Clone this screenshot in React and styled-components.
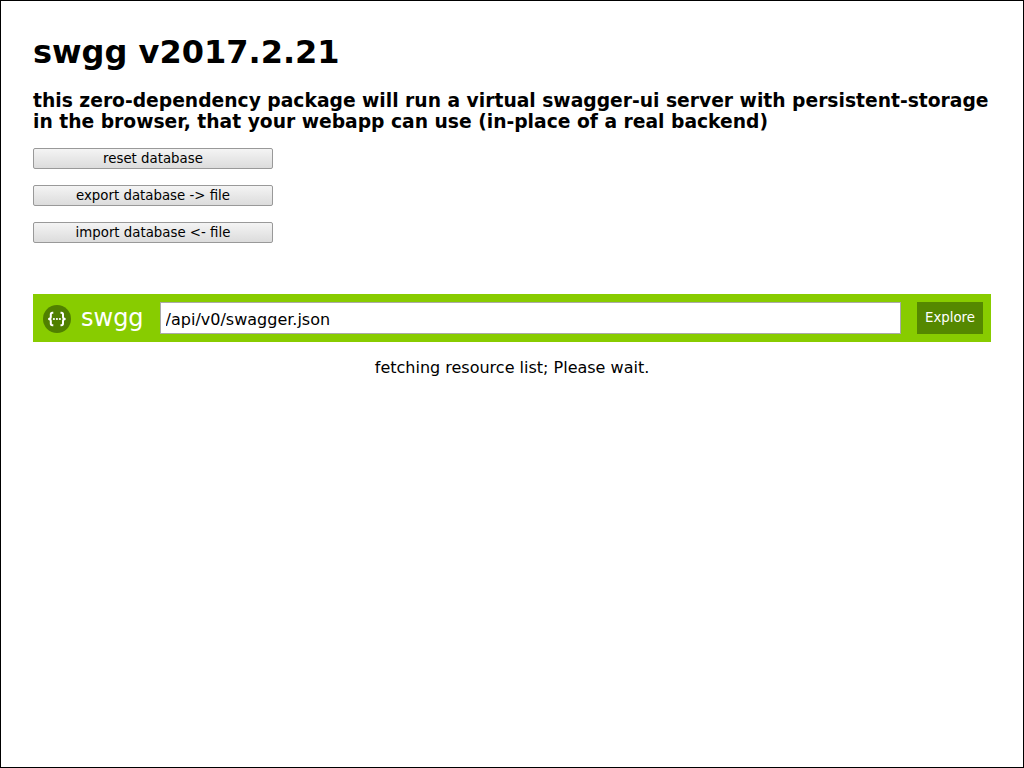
import React from "react";
import styled, { createGlobalStyle } from "styled-components";

const GlobalStyle = createGlobalStyle`
  * { box-sizing: border-box; }
  body {
    margin: 0;
    background: #fff;
    color: #000;
    font: 16px/19px "DejaVu Sans", Verdana, sans-serif;
  }
  button, input { font-family: inherit; }
`;

const Page = styled.main`
  min-height: 100vh;
  padding: 32px;
  border: 1px solid #000;
`;

const Title = styled.h1`
  margin: 0;
  font-size: 32px;
  line-height: 38px;
`;

const Intro = styled.h3`
  margin: 19px 0 16px;
  line-height: 21px;
`;

const Actions = styled.div`
  display: flex;
  flex-direction: column;
  align-items: flex-start;
  gap: 16px;
  margin-bottom: 51px;
`;

const ActionButton = styled.button`
  width: 240px;
  height: 21px;
  padding: 0 6px;
  border: 1px solid #999;
  border-radius: 2px;
  background: linear-gradient(#f4f4f4, #dcdcdc);
  color: #000;
  line-height: 16px;
`;

const Header = styled.form`
  display: flex;
  align-items: center;
  padding: 8px 8px 8px 10px;
  background: #8c0;
`;

const Brand = styled.a`
  display: flex;
  align-items: center;
  gap: 10px;
  margin-right: 16px;
  color: #fff;
  font-size: 24px;
  line-height: 28px;
  text-decoration: none;
`;

const Logo = styled.svg`
  width: 28px;
  height: 30px;
  flex: none;
`;

const UrlInput = styled.input`
  flex: 1;
  min-width: 0;
  height: 32px;
  margin-right: 16px;
  padding: 2px 5px 0;
  border: 1px solid #aaa;
  border-radius: 0;
  background: #fff;
  color: #000;
  font-size: 16px;
  line-height: 19px;
`;

const ExploreButton = styled.button`
  height: 32px;
  padding: 0 8px 1px;
  border: 0;
  background: #580;
  color: #fff;
  line-height: 16px;
`;

const Status = styled.p`
  margin: 16px 0 0;
  text-align: center;
`;

export default function App() {
  return (
    <Page>
      <GlobalStyle />
      <Title>swgg v2017.2.21</Title>
      <Intro>
        this zero-dependency package will run a virtual swagger-ui server with
        persistent-storage in the browser, that your webapp can use (in-place of
        a real backend)
      </Intro>
      <Actions>
        <ActionButton type="button">reset database</ActionButton>
        <ActionButton type="button">export database -&gt; file</ActionButton>
        <ActionButton type="button">import database &lt;- file</ActionButton>
      </Actions>
      <Header onSubmit={(event) => event.preventDefault()}>
        <Brand href="#">
          <Logo viewBox="0 -2 28 30" aria-hidden="true">
            <circle cx="14" cy="14" r="14" fill="#508000" />
            <g fill="none" stroke="#fff" strokeWidth="2">
              <path d="M10.3 7.8H9.4Q7.8 7.8 7.8 9.4V12Q7.8 14 5.2 14Q7.8 14 7.8 16V18.6Q7.8 20.2 9.4 20.2H10.3" />
              <path d="M17.5 7.8H18.4Q20 7.8 20 9.4V12Q20 14 22.6 14Q20 14 20 16V18.6Q20 20.2 18.4 20.2H17.5" />
            </g>
            <g fill="#fff">
              <circle cx="10.9" cy="14" r="1.1" />
              <circle cx="13.9" cy="14" r="1.1" />
              <circle cx="16.9" cy="14" r="1.1" />
            </g>
          </Logo>
          swgg
        </Brand>
        <UrlInput type="text" aria-label="Resource URL" defaultValue="/api/v0/swagger.json" />
        <ExploreButton type="submit">Explore</ExploreButton>
      </Header>
      <Status>fetching resource list; Please wait.</Status>
    </Page>
  );
}
